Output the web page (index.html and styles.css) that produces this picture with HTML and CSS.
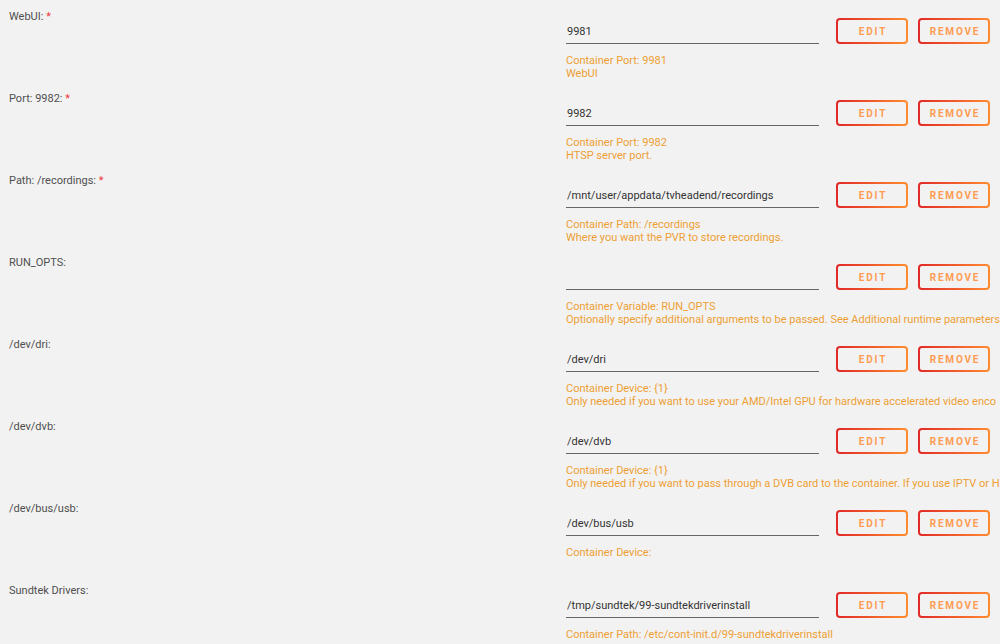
FILE: index.html
```html
<!DOCTYPE html>
<html>
	<head>
		<title>tvheadend</title>
		<meta charset="utf-8">
		<link rel="stylesheet" href="styles.css">
	</head>
	<body>
		<div class="config">
			<div class="row">
				<div class="label">WebUI: <span class="req">*</span></div>
				<div class="field">
					<div class="controls">
						<input type="text" value="9981">
						<button>EDIT</button><button>REMOVE</button>
					</div>
					<div class="help">Container Port: 9981<br>WebUI</div>
				</div>
			</div>
			<div class="row">
				<div class="label">Port: 9982: <span class="req">*</span></div>
				<div class="field">
					<div class="controls">
						<input type="text" value="9982">
						<button>EDIT</button><button>REMOVE</button>
					</div>
					<div class="help">Container Port: 9982<br>HTSP server port.</div>
				</div>
			</div>
			<div class="row">
				<div class="label">Path: /recordings: <span class="req">*</span></div>
				<div class="field">
					<div class="controls">
						<input type="text" value="/mnt/user/appdata/tvheadend/recordings">
						<button>EDIT</button><button>REMOVE</button>
					</div>
					<div class="help">Container Path: /recordings<br>Where you want the PVR to store recordings.</div>
				</div>
			</div>
			<div class="row">
				<div class="label">RUN_OPTS:</div>
				<div class="field">
					<div class="controls">
						<input type="text" value="">
						<button>EDIT</button><button>REMOVE</button>
					</div>
					<div class="help">Container Variable: RUN_OPTS<br>Optionally specify additional arguments to be passed. See Additional runtime parameters</div>
				</div>
			</div>
			<div class="row">
				<div class="label">/dev/dri:</div>
				<div class="field">
					<div class="controls">
						<input type="text" value="/dev/dri">
						<button>EDIT</button><button>REMOVE</button>
					</div>
					<div class="help">Container Device: {1}<br>Only needed if you want to use your AMD/Intel GPU for hardware accelerated video enco</div>
				</div>
			</div>
			<div class="row">
				<div class="label">/dev/dvb:</div>
				<div class="field">
					<div class="controls">
						<input type="text" value="/dev/dvb">
						<button>EDIT</button><button>REMOVE</button>
					</div>
					<div class="help">Container Device: {1}<br>Only needed if you want to pass through a DVB card to the container. If you use IPTV or H</div>
				</div>
			</div>
			<div class="row">
				<div class="label">/dev/bus/usb:</div>
				<div class="field">
					<div class="controls">
						<input type="text" value="/dev/bus/usb">
						<button>EDIT</button><button>REMOVE</button>
					</div>
					<div class="help">Container Device:</div>
				</div>
			</div>
			<div class="row">
				<div class="label">Sundtek Drivers:</div>
				<div class="field">
					<div class="controls">
						<input type="text" value="/tmp/sundtek/99-sundtekdriverinstall">
						<button>EDIT</button><button>REMOVE</button>
					</div>
					<div class="help">Container Path: /etc/cont-init.d/99-sundtekdriverinstall</div>
				</div>
			</div>
		</div>
	</body>
</html>
```

FILE: styles.css
```css
body {
	margin: 0;
	background: #f2f2f2;
	overflow: hidden;
	font-family: Roboto, "Noto Sans", sans-serif;
	font-size: 11px;
	color: #4f4f4f;
}
.config {width: 1000px;}
.row {
	display: grid;
	grid-template-columns: 566px 1fr;
	height: 82px;
}
.label {padding: 10px 0 0 9px; line-height: 13px;}
.req {color: #f0393b;}
.field {padding-top: 18px; min-width: 0;}
.controls {display: flex; align-items: center; gap: 10px;}
.controls input {
	box-sizing: border-box;
	width: 253px; height: 26px;
	margin: 0 7px 0 0; padding: 2px 1px 0;
	border: none; border-bottom: 1px solid #666;
	background: transparent;
	font-family: inherit; font-size: 11px;
	color: #333;
	outline: none;
}
.controls button {
	box-sizing: border-box;
	width: 72px; height: 26px;
	padding: 0 0 0 2px;
	border: 2px solid transparent;
	border-radius: 4px;
	background: linear-gradient(#f2f2f2, #f2f2f2) padding-box,
		linear-gradient(90deg, #e22828, #ff8c2f) border-box;
	font-family: inherit; font-size: 10px; font-weight: bold;
	letter-spacing: 1.8px;
	color: #ff9c52;
	cursor: pointer;
}
.help {
	margin-top: 10px;
	line-height: 13px;
	color: #ee9f34;
	white-space: nowrap;
	overflow: hidden;
}
```
